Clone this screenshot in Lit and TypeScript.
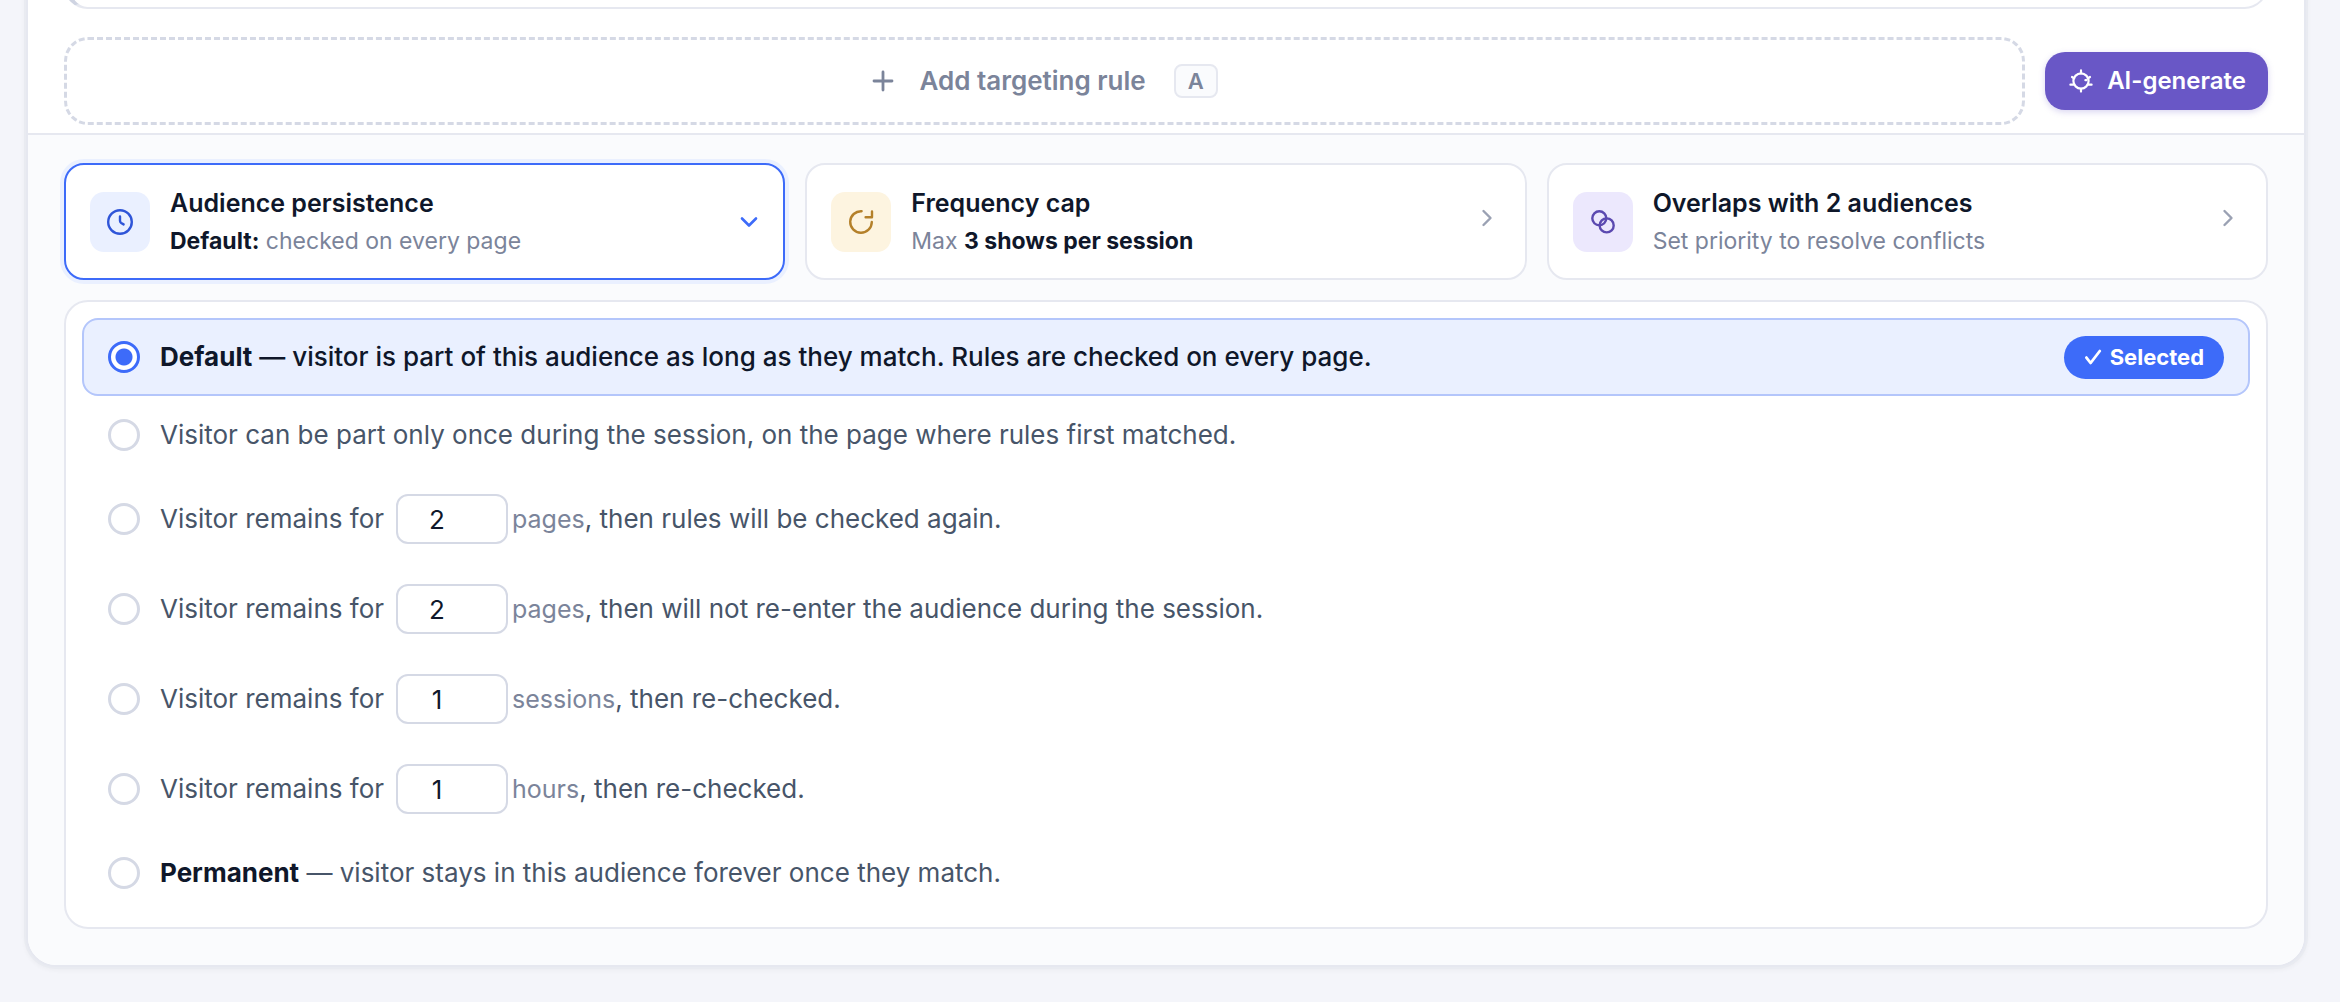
import { LitElement, html, css, svg, nothing, TemplateResult } from "lit";
import { customElement, state } from "lit/decorators.js";

interface Summary {
  id: string;
  tone: string;
  icon: TemplateResult;
  title: string;
  detail: TemplateResult;
}

interface Option {
  id: string;
  lead?: string;
  text: string;
  unit?: string;
  value?: number;
}

const glyph = (size: number, width: number, body: TemplateResult) => html`<svg
  width=${size} height=${size} viewBox="0 0 ${size} ${size}" fill="none" stroke="currentColor"
  stroke-width=${width} stroke-linecap="round" stroke-linejoin="round" aria-hidden="true">${body}</svg>`;

const clock = glyph(28, 2.4, svg`<circle cx="14" cy="14" r="11.8"/><path d="M14 8.4v4.4q0 1.4 1.2 2.2l2.4 1.4"/>`);
const refresh = glyph(28, 2.4, svg`<path d="M14.6 3.2a10.8 10.8 0 1 0 10.2 10.8"/><path d="M25 3.4v5.8h-6.4"/>`);
const overlap = glyph(28, 2.4, svg`<circle cx="10.3" cy="10.3" r="7"/><circle cx="17.7" cy="17.4" r="7"/>`);
const plus = glyph(24, 2.8, svg`<path d="M12 3v18M3 12h18"/>`);
const spark = glyph(24, 2.2, svg`<circle cx="12" cy="12" r="7.6"/><path d="M12 1.4v3M12 19.8v2.8M1.4 15.7h3.2M19.4 15.7h3.2M3 8l2.2 1.4M21 8l-2.2 1.4M16.4 11.2h1"/>`);
const check = glyph(18, 2.8, svg`<path d="M2.4 9.6l4.2 5.4L15.8 3"/>`);
const chevronRight = glyph(28, 2.4, svg`<path d="M10.5 3l7 7-7 7"/>`);
const chevronDown = glyph(28, 2.6, svg`<path d="M11 10.5l7 7 7-7"/>`);

const summaries: Summary[] = [
  { id: "persistence", tone: "blue", icon: clock, title: "Audience persistence",
    detail: html`<b>Default:</b> checked on every page` },
  { id: "frequency", tone: "amber", icon: refresh, title: "Frequency cap",
    detail: html`Max <b>3 shows per session</b>` },
  { id: "overlap", tone: "violet", icon: overlap, title: "Overlaps with 2 audiences",
    detail: html`Set priority to resolve conflicts` },
];

const options: Option[] = [
  { id: "default", lead: "Default", text: " — visitor is part of this audience as long as they match. Rules are checked on every page." },
  { id: "once", text: "Visitor can be part only once during the session, on the page where rules first matched." },
  { id: "pages", unit: "pages", value: 2, text: ", then rules will be checked again." },
  { id: "pages-once", unit: "pages", value: 2, text: ", then will not re-enter the audience during the session." },
  { id: "sessions", unit: "sessions", value: 1, text: ", then re-checked." },
  { id: "hours", unit: "hours", value: 1, text: ", then re-checked." },
  { id: "permanent", lead: "Permanent", text: " — visitor stays in this audience forever once they match." },
];

@customElement("app-root")
export class AppRoot extends LitElement {
  @state() private selected = "default";
  @state() private open = "persistence";

  static styles = css`
    :host {
      display: block;
      min-height: 100vh;
      box-sizing: border-box;
      padding: 0 34px 32px 26px;
      overflow: hidden;
      background: #f4f5fa;
      color: #0f172a;
      font-family: Inter, "Liberation Sans", sans-serif;
      font-size: 26px;
      line-height: 36px;
    }
    *, *::before, *::after { box-sizing: border-box; }
    svg { display: block; flex: none; }
    button, input { font: inherit; color: inherit; margin: 0; }
    button { cursor: pointer; }
    b { font-weight: 700; color: #0f172a; }
    .card {
      margin-top: -40px;
      border: 2px solid #e6e8f0;
      border-radius: 30px;
      box-shadow: 0 0 0 2px #e9ebf1, 0 2px 4px 2px #0f172a08;
      background: #fff;
      overflow: hidden;
    }
    .rules { padding: 0 36px 8px; }
    .rule {
      height: 47px;
      border: 2px solid #e6e8f0;
      border-left: 6px solid #cfd4e2;
      border-radius: 24px;
    }
    .actions { display: flex; align-items: center; gap: 20px; margin-top: 28px; }
    .add {
      flex: 1;
      display: flex;
      align-items: center;
      justify-content: center;
      gap: 24px;
      height: 88px;
      border: 3px dashed #d5d9e5;
      border-radius: 24px;
      background: none;
      color: #7b849a;
      font-weight: 600;
    }
    .key {
      margin-left: 4px;
      padding: 0 12px;
      border: 2px solid #e6e8f0;
      border-radius: 8px;
      background: #fafbfd;
      font: inherit;
      font-size: 22px;
      line-height: 30px;
    }
    .generate {
      display: flex;
      align-items: center;
      gap: 14px;
      height: 58px;
      padding: 0 22px 0 24px;
      border: 0;
      border-radius: 20px;
      background: #6957c6;
      box-shadow: 0 2px 6px #6957c640;
      color: #fff;
      font-size: 24px;
      font-weight: 600;
    }
    .settings { padding: 28px 36px 36px; border-top: 2px solid #e6e8f0; background: #fafbfd; }
    .summaries { display: grid; grid-template-columns: repeat(3, 1fr); gap: 20px; }
    .summary {
      display: flex;
      align-items: center;
      gap: 20px;
      height: 117px;
      padding: 0 24px;
      border: 2px solid #e6e8f0;
      border-radius: 20px;
      background: #fff;
      color: #9aa1b3;
      text-align: left;
    }
    .summary.open { border-color: #3d6bf9; box-shadow: 0 0 0 4px #eaf0ff; color: #3d6bf9; }
    .badge { display: grid; place-items: center; width: 60px; height: 60px; border-radius: 14px; }
    .blue { background: #eaf0ff; color: #2f55d8; }
    .amber { background: #fdf4e0; color: #b4802a; }
    .violet { background: #ece8fd; color: #5b49b0; }
    .copy { flex: 1; min-width: 0; }
    .title, .detail { display: block; line-height: 38px; }
    .title { color: #0f172a; font-size: 25px; font-weight: 600; }
    .detail { color: #7b849a; font-size: 23px; }
    .panel {
      margin: 20px 0 0;
      padding: 16px 16px 15px;
      border: 2px solid #e6e8f0;
      border-radius: 24px;
      background: #fff;
    }
    .option {
      display: flex;
      align-items: center;
      gap: 20px;
      min-height: 78px;
      padding: 0 24px;
      border: 2px solid transparent;
      border-radius: 16px;
      color: #475569;
    }
    .option.valued { min-height: 90px; }
    .option.on { border-color: #b4c6fb; background: #eaf0ff; color: #0f172a; font-weight: 500; }
    .radio {
      appearance: none;
      flex: none;
      width: 32px;
      height: 32px;
      border: 3px solid #d5d9e5;
      border-radius: 50%;
      background: #fff;
    }
    .radio:checked { border-color: #3d6bf9; background: radial-gradient(circle, #3d6bf9 8px, #fff 9px); }
    .sentence { flex: 1; display: flex; align-items: center; white-space: pre-wrap; }
    .amount {
      appearance: textfield;
      width: 112px;
      height: 50px;
      margin: 0 4px 0 12px;
      padding: 0 30px 0 0;
      border: 2px solid #d5d9e5;
      border-radius: 12px;
      background: #fff;
      color: #0f172a;
      text-align: center;
    }
    .amount::-webkit-inner-spin-button { display: none; }
    .unit { color: #7b849a; font-size: 25px; }
    .pill {
      display: flex;
      align-items: center;
      gap: 8px;
      padding: 0 20px;
      border-radius: 22px;
      background: #3d6bf9;
      color: #fff;
      font-size: 22px;
      font-weight: 700;
      line-height: 43px;
    }
  `;

  private renderSummary(item: Summary) {
    const open = item.id === this.open;
    return html`<button class="summary ${open ? "open" : ""}" aria-expanded=${open} @click=${() => (this.open = item.id)}>
      <span class="badge ${item.tone}">${item.icon}</span>
      <span class="copy"><span class="title">${item.title}</span><span class="detail">${item.detail}</span></span>
      ${open ? chevronDown : chevronRight}
    </button>`;
  }

  private renderOption(item: Option) {
    const on = item.id === this.selected;
    return html`<div class="option ${on ? "on" : ""} ${item.unit ? "valued" : ""}">
      <input class="radio" type="radio" name="persistence" id=${item.id} .checked=${on}
        @change=${() => (this.selected = item.id)} />
      <div class="sentence">${item.unit
        ? html`<label for=${item.id}>Visitor remains for</label><input class="amount" type="number" min="1" aria-label=${item.unit} .value=${String(item.value)} /><span class="unit">${item.unit}</span><span>${item.text}</span>`
        : html`<label for=${item.id}>${item.lead ? html`<b>${item.lead}</b>` : nothing}${item.text}</label>`}</div>
      ${on ? html`<span class="pill">${check}Selected</span>` : nothing}
    </div>`;
  }

  render() {
    return html`<main class="card">
      <section class="rules">
        <div class="rule"></div>
        <div class="actions">
          <button class="add">${plus}<span>Add targeting rule</span><kbd class="key">A</kbd></button>
          <button class="generate">${spark}AI-generate</button>
        </div>
      </section>
      <section class="settings">
        <div class="summaries">${summaries.map((s) => this.renderSummary(s))}</div>
        <div class="panel" role="radiogroup" aria-label="Audience persistence">
          ${options.map((o) => this.renderOption(o))}
        </div>
      </section>
    </main>`;
  }
}
